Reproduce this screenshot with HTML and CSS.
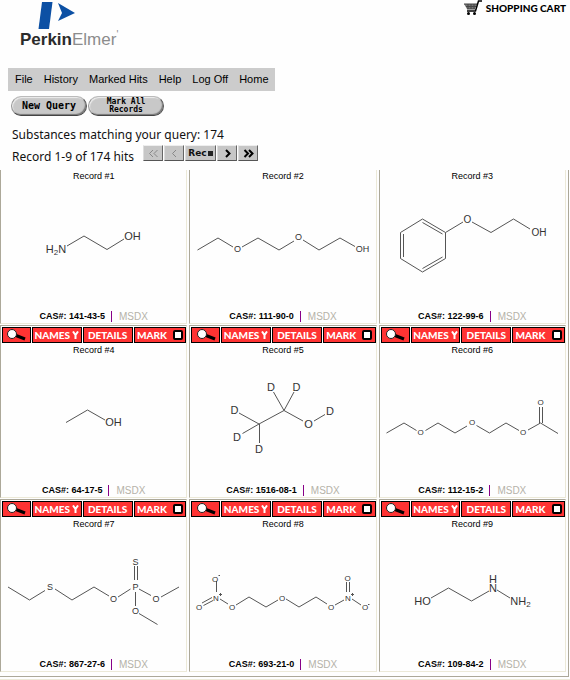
FILE: index.html
```html
<!DOCTYPE html>
<html lang="en">
<head>
<meta charset="utf-8">
<title>PerkinElmer - Substances</title>
<link rel="stylesheet" href="styles.css">
</head>
<body>
<header class="top">
  <div class="brand-row">
    <a class="brand" href="#">
      <svg class="brand-mark" width="60" height="30" viewBox="0 0 60 30" aria-hidden="true">
        <path class="blue" d="M22 2H32.500L29 29H18.500Z"/>
        <path class="blue" d="M38 3L55 13L38 21L42 13Z"/>
      </svg>
      <span class="brand-name"><b>Perkin</b>Elmer<sup>'</sup></span>
    </a>
    <a class="cart" href="#">
      <svg width="18" height="15" viewBox="0 0 18 15" aria-hidden="true">
        <path d="M0 4H13L11 9H3Z" fill="#777"/>
        <path d="M0 4H13M2 6.500H12M3 9H11M4 4V9M7 4V9M10 4V9" stroke="#444" fill="none"/>
        <path d="M18 1H14.500L11.500 11H3" stroke="#000" stroke-width="1.500" fill="none"/>
        <circle cx="4.500" cy="13.500" r="1.500"/><circle cx="10.500" cy="13.500" r="1.500"/>
      </svg>
      SHOPPING CART
    </a>
  </div>
  <nav class="menu">
    <a href="#">File</a><a href="#">History</a><a href="#">Marked Hits</a><a href="#">Help</a><a href="#">Log Off</a><a href="#">Home</a>
  </nav>
  <div class="actions">
    <button class="pill" type="button">New Query</button>
    <button class="pill small" type="button">Mark All<br>Records</button>
  </div>
  <p class="summary">Substances matching your query: 174</p>
  <div class="pager">
    <span>Record 1-9 of 174 hits</span>
    <button type="button" disabled aria-label="First"><svg width="11" height="9" viewBox="0 0 11 9"><path d="M5 1L1.500 4.500L5 8M9.500 1L6 4.500L9.500 8"/></svg></button>
    <button type="button" disabled aria-label="Previous"><svg width="11" height="9" viewBox="0 0 11 9"><path d="M7 1L3.500 4.500L7 8"/></svg></button>
    <button class="rec" type="button">Rec<i></i></button>
    <button type="button" aria-label="Next"><svg width="11" height="9" viewBox="0 0 11 9"><path d="M4 1L7.500 4.500L4 8"/></svg></button>
    <button type="button" aria-label="Last"><svg width="11" height="9" viewBox="0 0 11 9"><path d="M1.500 1L5 4.500L1.500 8M6 1L9.500 4.500L6 8"/></svg></button>
  </div>
</header>
<main class="results" id="results"></main>
<script src="records.js"></script>
</body>
</html>
```
FILE: styles.css
```css
* { box-sizing: border-box; }
body {
  margin: 0;
  background: #fefefe;
  color: #000;
  font-family: "Liberation Sans", Arial, sans-serif;
  border-bottom: 1px solid #ece9d8;
}
a { color: inherit; text-decoration: none; }
button { font: inherit; color: inherit; padding: 0; margin: 0; }
.top { height: 170px; overflow: hidden; }
.brand-row { display: flex; justify-content: space-between; height: 68px; }
.brand { display: flex; flex-direction: column; padding-left: 20px; }
.brand-mark { display: block; height: 30px; }
.blue { fill: #0c50a4; }
.brand-name { font-size: 17px; line-height: 20px; color: #8c8c8c; }
.brand-name b { color: #2b2b2b; }
.brand-name sup { font-size: 10px; line-height: 1px; }
.cart {
  display: flex;
  gap: 4px;
  height: 16px;
  padding-right: 4px;
  font: 900 10px/16px Lato, sans-serif;
}
.menu {
  display: flex;
  gap: 11px;
  width: max-content;
  margin-left: 8px;
  padding: 0 6px 0 7px;
  background: #ccc;
  font: 11px/23px "Liberation Sans", Arial, sans-serif;
}
.actions { display: flex; gap: 1px; padding: 5px 0 0 11px; }
.pill {
  width: 76px;
  height: 20px;
  border: 1px solid #777;
  border-color: #bbb #555 #444 #999;
  border-radius: 10px;
  background: #c8c8c8;
  box-shadow: inset 1px 1px 1px #eee, inset -1px -1px 1px #777;
  font: bold 10px/18px "DejaVu Sans Mono", monospace;
  white-space: nowrap;
}
.pill.small { font-size: 8px; line-height: 8px; }
.summary, .pager { font: 12px/18px "Noto Sans", "DejaVu Sans", sans-serif; color: #111; }
.summary { margin: 10px 0 0 12px; }
.pager { display: flex; align-items: center; gap: 1px; padding-left: 12px; }
.pager span { padding: 4px 8px 0 0; }
.pager button {
  display: flex;
  align-items: center;
  justify-content: center;
  width: 20px;
  height: 16px;
  margin-bottom: 4px;
  border: 1px solid;
  border-color: #eee #666 #555 #ddd;
  background: #c6c6c6;
  font: bold 9px/14px "DejaVu Sans", sans-serif;
}
.pager .rec { width: 31px; }
.pager i { width: 5px; height: 5px; margin-left: 1px; background: #222; }
.pager path { fill: none; stroke: #000; stroke-width: 2; }
.pager button:disabled path { stroke: #888; stroke-width: 1; }

.results {
  display: grid;
  grid-template-columns: repeat(3, 1fr);
  gap: 1px 2px;
  margin: 0 1px 2px 0;
  padding: 0 2px 4px 0;
  border-right: 1px solid #aca899;
  border-bottom: 1px solid #aca899;
}
.card {
  border: 1px solid #ece9d8;
  border-color: #aca899 #ece9d8 #ece9d8 #aca899;
  text-align: center;
}
.card:nth-child(-n+3) { border-top: 0; }
.tools {
  display: grid;
  grid-template-columns: 30fr 51fr 51fr 53fr;
  height: 18px;
  padding: 1px 0 1px 1px;
}
.tool {
  display: flex;
  align-items: center;
  justify-content: center;
  gap: 2px;
  border: 1px solid #000;
  margin-right: 1px;
  background: #f33;
  color: #fff;
  font: 900 10px/14px Lato, sans-serif;
}
.tool.mark { gap: 6px; margin-right: 0; }
.tool input {
  appearance: none;
  width: 10px;
  height: 10px;
  margin: 0;
  border: 2px solid #000;
  border-radius: 2px;
  background: #fff;
}
.title { margin: 0; font: 9px/12px "Liberation Sans", Arial, sans-serif; }
.structure { display: block; width: 185px; height: 128px; margin: 0 auto; }
.structure path { fill: none; stroke: #555; stroke-width: 1; }
.structure text { fill: #333; text-anchor: middle; font-family: "Liberation Sans", sans-serif; }
.structure .sub { font-size: 8px; }
.ids {
  display: flex;
  align-items: center;
  justify-content: center;
  gap: 6px;
  margin: 0;
  font: bold 9px/13px "Liberation Sans", Arial, sans-serif;
}
.ids a { border-left: 1px solid #808; padding-left: 7px; color: #b5b2a8; font: 10px/11px "Liberation Sans", sans-serif; }
```
FILE: records.js
```js
// Each structure: viewBox origin, label size, bond path, atom labels [text, centre x, centre y].
const records = [
  { cas: "141-43-5", o: [1, 182], size: 11,
    d: "M67 246L84 236L107 249.500L124 239",
    t: [["H<tspan class='sub' dy='2'>2</tspan><tspan dy='-2'>N</tspan>", 56, 249], ["OH", 132.500, 236]] },
  { cas: "111-90-0", o: [190, 182], size: 9,
    d: "M197.500 250L218 238L233 247M242 247L258 238L279 250L294 241M303 240L319 250L340 238L355 246.500",
    t: [["O", 237.500, 248.500], ["O", 298.500, 237], ["OH", 362.500, 249]] },
  { cas: "122-99-6", o: [380, 182], size: 10,
    d: "M422.500 219L445.500 232.500V258.500L422.500 272L400.500 258.500V232.500ZM422.500 222.500L442.500 234M442.500 257L422.500 268.500M403.500 257V234M445.500 232.500L463 222M472 222L491 232.500L513.500 219L530 229",
    t: [["O", 467.500, 219], ["OH", 539, 232]] },
  { cas: "64-17-5", o: [1, 356], size: 11,
    d: "M66 422.500L87.500 410L105 420",
    t: [["OH", 113.500, 422]] },
  { cas: "1516-08-1", o: [190, 356], size: 11,
    d: "M273.500 392L284 410.500L294 392M239 413L259 424L284 410.500L303 421M242.500 433.500L259 424M259.500 443V424M314 421L325 414.500",
    t: [["D", 271, 387], ["D", 296.500, 387], ["D", 234.500, 410], ["D", 237, 436.500], ["D", 259, 449], ["O", 308.500, 424], ["D", 330, 411]] },
  { cas: "112-15-2", o: [380, 356], size: 8,
    d: "M386.500 433L404 423L416.500 430.500M425.500 430.500L438 423L455 433L467 426M476.500 425.500L489.500 433L506 423L519 430.500M528 430L540.500 423L558 433.500M539.500 423V407M542.500 423V407",
    t: [["O", 420.500, 432], ["O", 472, 422], ["O", 523, 432], ["O", 540.500, 402]] },
  { cas: "867-27-6", o: [1, 530], size: 9,
    d: "M8 587L29.500 600L45 590.500M55 589L72 600L94 587L109 596M118 597L130.500 589M134.500 580V566M137.500 580V566M139 589L151 595.500M161 597L179 587M135.500 592V606M139 613.500L157.500 624.500",
    t: [["S", 50, 586.500], ["O", 113.500, 598.500], ["P", 135.500, 586.500], ["S", 135.500, 561.500], ["O", 156, 598.500], ["O", 135.500, 611]] },
  { cas: "693-21-0", o: [190, 530], size: 8,
    d: "M216.500 581V592M202 603L212 597.500M203.500 605.500L213 600.500M220 599L228 604M236 605L249 597L266 607L278 600M286 599L299 607L316 597L327 604M335 605L344 600M346.500 592V582M349.500 592V582M352 599L361 605M218.500 575.500H220M368 604.500H369.500M219 594.500H222M220.500 593V596M351 594.500H354M352.500 593V596",
    t: [["O", 215, 578.500], ["N", 216, 597.500], ["O", 199, 607], ["O", 232, 607], ["O", 282, 597.500], ["O", 331, 607], ["N", 348, 597.500], ["O", 347.500, 578], ["O", 365, 607]] },
  { cas: "109-84-2", o: [380, 530], size: 11,
    d: "M431 598L448.500 588L471.500 601L489 591M497 590L510 598",
    t: [["HO", 422.500, 601], ["N<tspan x='493' dy='-9'>H</tspan>", 493, 588], ["NH<tspan class='sub' dy='2'>2</tspan>", 520.500, 601]] }
];

const tools = n => `<div class="tools">
  <button class="tool" type="button" aria-label="Zoom"><svg width="20" height="12" viewBox="0 0 20 12"><path d="M10 6.500L19 10" stroke="#000" stroke-width="3"/><circle cx="6" cy="5" r="4.500" fill="#fff" stroke="#222"/></svg></button>
  <button class="tool" type="button">NAMES<svg width="7" height="8" viewBox="0 0 7 8"><path d="M1 0.500L3.500 4L6 0.500M3.500 4V8" fill="none" stroke="#fff" stroke-width="2"/></svg></button>
  <button class="tool" type="button">DETAILS</button>
  <label class="tool mark" for="mark${n}">MARK<input type="checkbox" id="mark${n}"></label>
</div>`;

document.getElementById("results").innerHTML = records.map((r, i) => `<article class="card">
  ${i > 2 ? tools(i + 1) : ""}
  <h2 class="title">Record #${i + 1}</h2>
  <svg class="structure" viewBox="${r.o[0]} ${r.o[1]} 185 128" font-size="${r.size}"><path d="${r.d}"/>${r.t.map(([s, x, y]) => `<text x="${x}" y="${y + Math.round(r.size * 0.36)}">${s}</text>`).join("")}</svg>
  <p class="ids">CAS#: ${r.cas}<a href="#">MSDX</a></p>
</article>`).join("");
```
